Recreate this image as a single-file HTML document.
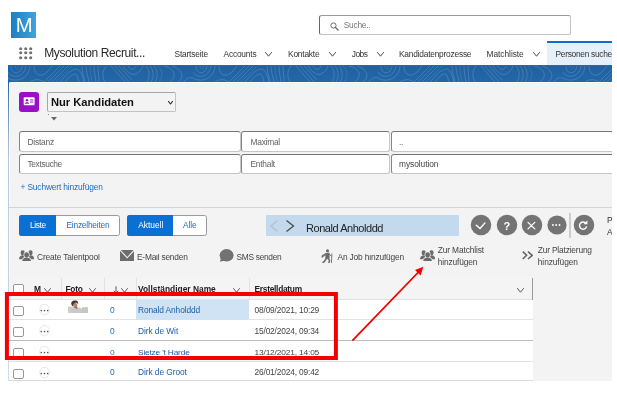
<!DOCTYPE html>
<html lang="de"><head><meta charset="utf-8"><title>Mysolution Recruitment</title>
<style>
html,body{margin:0;padding:0;background:#fff;}
body{width:617px;height:401px;position:relative;overflow:hidden;font-family:"Liberation Sans",sans-serif;}
#app{position:absolute;left:0;top:0;width:612px;height:401px;overflow:hidden;will-change:transform;}
.a{position:absolute;box-sizing:border-box;}
.t{position:absolute;white-space:nowrap;font-family:"Liberation Sans",sans-serif;}
</style></head><body><div id="app">
<div class="a" style="left:8px;top:65px;width:1px;height:316px;background:linear-gradient(#2262a4 0,#2465a6 5.4%,#4a7db3 10.4%,#9cb5d3 23.7%,#b4c8de 30%,#cfdbe8 100%);"></div>
<div class="a" style="left:8px;top:65px;width:604px;height:18px;background:linear-gradient(#1f62a4,#2367a8);border-top:1px solid #0b6fd0;"></div>
<svg class="a" style="left:8px;top:66px" width="604" height="16" viewBox="0 0 604 16">
<defs><pattern id="topo" width="185" height="16" patternUnits="userSpaceOnUse">
<g fill="none" stroke="#ffffff" stroke-opacity="0.27" stroke-width="0.55">
<path d="M3 0 C3 9 13 9 14 0"/><path d="M0 6 C4 13 16 12 18 0"/><path d="M0 12 C8 17 21 13 22 0"/><path d="M7 0 C8 4 10 4 11 0" stroke-dasharray="1 1"/>
<path d="M26 0 C26 10 34 12 40 5 L44 0"/><path d="M22 16 C28 12 33 14 36 16"/>
<path d="M36 16 L52 0"/><path d="M40 16 L56 0"/><path d="M44 16 L60 0"/><path d="M48 16 L64 0" stroke-dasharray="1.5 1"/><path d="M52 16 C58 9 62 4 68 3 C72 3 74 8 76 16"/>
<path d="M57 16 C61 11 64 8 67 8 C69 8 70 12 71 16"/>
<path d="M74 0 C74 6 76 10 77 16"/><path d="M78 0 C78 6 80 10 81 16"/><path d="M82 0 C82 6 83 10 84 16" stroke-dasharray="1.5 1"/><path d="M86 0 C86 6 87 10 88 16"/><path d="M90 0 C90 6 91 10 91 16"/>
<path d="M98 0 C94 5 94 11 97 16"/>
<path d="M103 0 L117 16"/><path d="M107 0 L121 16"/><path d="M111 0 L124 14"/><path d="M115 0 C119 6 124 10 128 8 C132 6 134 3 135 0"/><path d="M120 0 C122 4 126 5 128 0"/>
<path d="M138 0 C142 4 142 12 139 16"/><path d="M142 0 C146 4 146 12 143 16"/><path d="M146 0 C150 4 150 12 147 16"/><path d="M150 0 C155 5 155 11 151 16" stroke-dasharray="1.5 1"/>
<path d="M156 0 C166 2 170 10 162 16"/><path d="M164 0 C174 3 177 11 170 16"/><path d="M176 16 C178 12 182 11 185 12"/>
</g></pattern></defs><rect width="604" height="16" fill="url(#topo)"/></svg>
<div class="a" style="left:9px;top:82px;width:603px;height:299px;background:#f3f3f3;border-top-left-radius:2px;border-left:1px solid #fafafa;border-top:1px solid #fafafa;"></div>
<div class="a" style="left:11px;top:12px;width:25px;height:26px;background:linear-gradient(90deg,#1a80c2,#41a3dd);"></div>
<span class="t" style="left:15.75px;top:12.90px;font-size:19.5px;line-height:25px;color:#fff;transform:scaleX(1.04);transform-origin:50% 50%;">M</span>
<svg class="a" style="left:19.30px;top:46.50px" width="3.4" height="3.4" viewBox="0 0 3.4 3.4"><circle cx="1.7" cy="1.7" r="1.55" fill="#707070"/></svg>
<svg class="a" style="left:24.30px;top:46.50px" width="3.4" height="3.4" viewBox="0 0 3.4 3.4"><circle cx="1.7" cy="1.7" r="1.55" fill="#707070"/></svg>
<svg class="a" style="left:29.30px;top:46.50px" width="3.4" height="3.4" viewBox="0 0 3.4 3.4"><circle cx="1.7" cy="1.7" r="1.55" fill="#707070"/></svg>
<svg class="a" style="left:19.30px;top:51.40px" width="3.4" height="3.4" viewBox="0 0 3.4 3.4"><circle cx="1.7" cy="1.7" r="1.55" fill="#707070"/></svg>
<svg class="a" style="left:24.30px;top:51.40px" width="3.4" height="3.4" viewBox="0 0 3.4 3.4"><circle cx="1.7" cy="1.7" r="1.55" fill="#707070"/></svg>
<svg class="a" style="left:29.30px;top:51.40px" width="3.4" height="3.4" viewBox="0 0 3.4 3.4"><circle cx="1.7" cy="1.7" r="1.55" fill="#707070"/></svg>
<svg class="a" style="left:19.30px;top:56.30px" width="3.4" height="3.4" viewBox="0 0 3.4 3.4"><circle cx="1.7" cy="1.7" r="1.55" fill="#707070"/></svg>
<svg class="a" style="left:24.30px;top:56.30px" width="3.4" height="3.4" viewBox="0 0 3.4 3.4"><circle cx="1.7" cy="1.7" r="1.55" fill="#707070"/></svg>
<svg class="a" style="left:29.30px;top:56.30px" width="3.4" height="3.4" viewBox="0 0 3.4 3.4"><circle cx="1.7" cy="1.7" r="1.55" fill="#707070"/></svg>
<span class="t" style="left:44.20px;top:45.20px;font-size:12px;line-height:16px;color:#2a2a2a;letter-spacing:-0.376px;">Mysolution Recruit...</span>
<div class="a" style="left:319px;top:15px;width:252px;height:20px;background:#fff;border:1px solid #c4c4c4;border-top-color:#999;border-left-color:#666;border-radius:2.5px;"></div>
<svg class="a" style="left:329.8px;top:22.2px" width="10" height="10" viewBox="0 0 10 10"><circle cx="3.5" cy="3.5" r="2.6" fill="none" stroke="#666" stroke-width="0.95"/><path d="M5.5 5.5 L8.2 8" stroke="#666" stroke-width="1.2" stroke-linecap="round"/></svg>
<span class="t" style="left:343.75px;top:20.40px;font-size:8.4px;line-height:11px;color:#777;letter-spacing:-0.248px;">Suche..</span>
<span class="t" style="left:174.50px;top:48.90px;font-size:8.4px;line-height:11px;color:#333;letter-spacing:-0.198px;">Startseite</span>
<span class="t" style="left:223.50px;top:48.90px;font-size:8.4px;line-height:11px;color:#333;letter-spacing:-0.194px;">Accounts</span>
<svg class="a" style="left:265.00px;top:52.10px" width="7.00" height="5.20" viewBox="0 0 7.00 5.20"><path d="M0.5 0.5 L3.50 4.20 L6.50 0.5" fill="none" stroke="#484848" stroke-width="1" stroke-linecap="round" stroke-linejoin="round"/></svg>
<span class="t" style="left:288.00px;top:48.90px;font-size:8.4px;line-height:11px;color:#333;letter-spacing:-0.207px;">Kontakte</span>
<svg class="a" style="left:328.50px;top:52.10px" width="7.00" height="5.20" viewBox="0 0 7.00 5.20"><path d="M0.5 0.5 L3.50 4.20 L6.50 0.5" fill="none" stroke="#484848" stroke-width="1" stroke-linecap="round" stroke-linejoin="round"/></svg>
<span class="t" style="left:351.75px;top:48.90px;font-size:8.4px;line-height:11px;color:#333;letter-spacing:-0.498px;">Jobs</span>
<svg class="a" style="left:376.50px;top:52.10px" width="7.00" height="5.20" viewBox="0 0 7.00 5.20"><path d="M0.5 0.5 L3.50 4.20 L6.50 0.5" fill="none" stroke="#484848" stroke-width="1" stroke-linecap="round" stroke-linejoin="round"/></svg>
<span class="t" style="left:399.00px;top:48.90px;font-size:8.4px;line-height:11px;color:#333;letter-spacing:-0.227px;">Kandidatenprozesse</span>
<span class="t" style="left:486.60px;top:48.90px;font-size:8.4px;line-height:11px;color:#333;letter-spacing:-0.061px;">Matchliste</span>
<svg class="a" style="left:532.50px;top:52.10px" width="7.00" height="5.20" viewBox="0 0 7.00 5.20"><path d="M0.5 0.5 L3.50 4.20 L6.50 0.5" fill="none" stroke="#484848" stroke-width="1" stroke-linecap="round" stroke-linejoin="round"/></svg>
<div class="a" style="left:547.4px;top:41px;width:64.60000000000002px;height:24px;background:#e5f0fb;border-top:2px solid #0b6fd0;"></div>
<span class="t" style="left:555.50px;top:48.90px;font-size:8.4px;line-height:11px;color:#333;letter-spacing:-0.292px;">Personen suchen</span>
<div class="a" style="left:19px;top:92px;width:20px;height:20px;background:#9a0fc8;border-radius:3px;"></div>
<svg class="a" style="left:23px;top:97px" width="12.3" height="8.6" viewBox="0 0 12 9"><rect x="0.3" y="0.3" width="11.4" height="8.4" rx="1" fill="#fff"/><circle cx="3.7" cy="3.4" r="1.3" fill="#9a0fc8"/><path d="M1.6 7 C1.6 5 5.8 5 5.8 7 Z" fill="#9a0fc8"/><rect x="7" y="2.6" width="3.3" height="1" fill="#9a0fc8"/><rect x="7" y="4.8" width="3.3" height="1" fill="#9a0fc8"/></svg>
<div class="a" style="left:47px;top:92px;width:129px;height:20px;background:#f3f3f3;border:1px solid #c2c2c2;border-top-color:#a6a6a6;border-left-color:#a6a6a6;border-radius:2px;"></div>
<span class="t" style="left:51.00px;top:95.40px;font-size:11.2px;line-height:15px;color:#111;font-weight:700;letter-spacing:-0.027px;">Nur Kandidaten</span>
<svg class="a" style="left:168.00px;top:100.80px" width="5.00" height="4.00" viewBox="0 0 5.00 4.00"><path d="M0.5 0.5 L2.50 3.00 L4.50 0.5" fill="none" stroke="#222" stroke-width="1.1" stroke-linecap="round" stroke-linejoin="round"/></svg>
<div class="a" style="left:48px;top:114px;width:1px;height:1px;background:#888;"></div>
<svg class="a" style="left:51px;top:117px" width="6" height="4" viewBox="0 0 6 4"><path d="M0 0 L6 0 L3 3.6 Z" fill="#666"/></svg>
<div class="a" style="left:19px;top:131px;width:221.5px;height:20.5px;background:#fff;border:1px solid #c6c6c6;border-top-color:#777;border-left-color:#858585;border-radius:3px;"></div>
<div class="a" style="left:241px;top:131px;width:148.5px;height:20.5px;background:#fff;border:1px solid #c6c6c6;border-top-color:#777;border-left-color:#858585;border-radius:3px;"></div>
<div class="a" style="left:391px;top:131px;width:225px;height:20.5px;background:#fff;border:1px solid #c6c6c6;border-top-color:#777;border-left-color:#858585;border-radius:3px;"></div>
<div class="a" style="left:19px;top:154px;width:221.5px;height:20px;background:#fff;border:1px solid #c6c6c6;border-top-color:#777;border-left-color:#858585;border-radius:3px;"></div>
<div class="a" style="left:241px;top:154px;width:148.5px;height:20px;background:#fff;border:1px solid #c6c6c6;border-top-color:#777;border-left-color:#858585;border-radius:3px;"></div>
<div class="a" style="left:391px;top:154px;width:225px;height:20px;background:#fff;border:1px solid #c6c6c6;border-top-color:#777;border-left-color:#858585;border-radius:3px;"></div>
<span class="t" style="left:27.50px;top:136.50px;font-size:8.4px;line-height:11px;color:#606060;letter-spacing:-0.216px;">Distanz</span>
<span class="t" style="left:27.50px;top:159.00px;font-size:8.4px;line-height:11px;color:#606060;letter-spacing:-0.369px;">Textsuche</span>
<span class="t" style="left:250.50px;top:136.50px;font-size:8.4px;line-height:11px;color:#606060;letter-spacing:-0.253px;">Maximal</span>
<span class="t" style="left:250.50px;top:159.00px;font-size:8.4px;line-height:11px;color:#606060;letter-spacing:-0.236px;">Enthalt</span>
<span class="t" style="left:399.00px;top:136.80px;font-size:8.4px;line-height:11px;color:#666;letter-spacing:-0.334px;">..</span>
<span class="t" style="left:399.00px;top:159.00px;font-size:8.4px;line-height:11px;color:#444;letter-spacing:-0.065px;">mysolution</span>
<span class="t" style="left:20.50px;top:182.00px;font-size:8.4px;line-height:11px;color:#1b6ec2;letter-spacing:-0.152px;">+ Suchwert hinzufügen</span>
<div class="a" style="left:9px;top:207px;width:603px;height:1px;background:#d4d4d4;"></div>
<div class="a" style="left:19px;top:215px;width:100.5px;height:20.5px;background:#fff;border:1px solid #9a9a9a;border-radius:2.5px;"></div>
<div class="a" style="left:19px;top:215px;width:36.5px;height:20.5px;background:#0b70d4;border-radius:2.5px 0 0 2.5px;"></div>
<span class="t" style="left:30.00px;top:220.00px;font-size:8.4px;line-height:11px;color:#fff;letter-spacing:-0.398px;">Liste</span>
<span class="t" style="left:66.50px;top:220.00px;font-size:8.4px;line-height:11px;color:#1b6ec2;letter-spacing:-0.230px;">Einzelheiten</span>
<div class="a" style="left:127px;top:215px;width:80px;height:20.5px;background:#fff;border:1px solid #9a9a9a;border-radius:2.5px;"></div>
<div class="a" style="left:127px;top:215px;width:46px;height:20.5px;background:#0b70d4;border-radius:2.5px 0 0 2.5px;"></div>
<span class="t" style="left:138.30px;top:220.00px;font-size:8.4px;line-height:11px;color:#fff;letter-spacing:-0.030px;">Aktuell</span>
<span class="t" style="left:183.00px;top:220.00px;font-size:8.4px;line-height:11px;color:#1b6ec2;letter-spacing:-0.127px;">Alle</span>
<div class="a" style="left:266px;top:215px;width:193px;height:20.5px;background:#c3daee;"></div>
<svg class="a" style="left:269px;top:219px" width="28" height="14" viewBox="0 0 28 14"><path d="M8.5 1.5 L2 7 L8.5 12.5" fill="none" stroke="#b4bfc9" stroke-width="1.2"/><path d="M17.5 1.5 L24.5 7 L17.5 12.5" fill="none" stroke="#4a4a4a" stroke-width="1.3"/></svg>
<span class="t" style="left:306.00px;top:220.90px;font-size:11px;line-height:14px;color:#222;letter-spacing:-0.453px;">Ronald Anholddd</span>
<svg class="a" style="left:470.3px;top:214px" width="22" height="22" viewBox="0 0 22 22"><circle cx="11" cy="11" r="10.25" fill="#747474"/></svg>
<svg class="a" style="left:495.6px;top:214px" width="22" height="22" viewBox="0 0 22 22"><circle cx="11" cy="11" r="10.25" fill="#747474"/></svg>
<svg class="a" style="left:520.7px;top:214px" width="22" height="22" viewBox="0 0 22 22"><circle cx="11" cy="11" r="10.25" fill="#747474"/></svg>
<svg class="a" style="left:545.5px;top:214px" width="22" height="22" viewBox="0 0 22 22"><circle cx="11" cy="11" r="9.6" fill="#747474"/></svg>
<svg class="a" style="left:572.6px;top:214px" width="22" height="22" viewBox="0 0 22 22"><circle cx="11" cy="11" r="10.25" fill="#747474"/></svg>
<svg class="a" style="left:470.3px;top:214px" width="130" height="22" viewBox="0 0 130 22"><path d="M6.3 11.3 L10 14.5 L15 8.9" fill="none" stroke="#fff" stroke-width="1.4" stroke-linecap="round" stroke-linejoin="round"/><path d="M58 8.4 L64.8 14.9 M64.8 8.4 L58 14.9" stroke="#fff" stroke-width="1.3" stroke-linecap="round"/><circle cx="82.9" cy="11" r="0.95" fill="#fff"/><circle cx="86.2" cy="11" r="0.95" fill="#fff"/><circle cx="89.5" cy="11" r="0.95" fill="#fff"/><path d="M115.6 9 A3.6 3.6 0 1 0 116.6 12.4" fill="none" stroke="#fff" stroke-width="1.4"/><path d="M117.4 6.3 L117.4 10.2 L113.5 10.2 Z" fill="#fff"/></svg>
<span class="t" style="left:503.60px;top:218.80px;font-size:11px;line-height:14px;color:#fff;font-weight:700;letter-spacing:-0.919px;">?</span>
<div class="a" style="left:569px;top:213px;width:2px;height:25px;background:#cdcdcd;"></div>
<span class="t" style="left:607.00px;top:214.50px;font-size:8.4px;line-height:11px;color:#333;">Pe</span>
<span class="t" style="left:607.00px;top:226.70px;font-size:8.4px;line-height:11px;color:#333;">Ak</span>
<svg class="a" style="left:19px;top:249.8px" width="15.2" height="11.4" viewBox="0 0 15.2 11.4"><g fill="#6b6b6b"><ellipse cx="3.7" cy="2.7" rx="2.15" ry="2.5"/><ellipse cx="11.5" cy="2.7" rx="2.15" ry="2.5"/><path d="M0 9.3 C0 6.8 1.2 5.7 3.4 5.3 L5.6 5.6 L4.6 9.3 Z"/><path d="M15.2 9.3 C15.2 6.8 14 5.7 11.8 5.3 L9.6 5.6 L10.6 9.3 Z"/><path d="M2.5 11.4 C2.5 8.4 4.6 6.7 7.6 6.7 C10.6 6.7 12.7 8.4 12.7 11.4 Z" fill="#f3f3f3"/><ellipse cx="7.6" cy="4.7" rx="3" ry="3.2" fill="#f3f3f3"/><path d="M3.2 11.4 C3.2 8.8 5 7.4 7.6 7.4 C10.2 7.4 12 8.8 12 11.4 Z"/><ellipse cx="7.6" cy="4.8" rx="2.35" ry="2.6"/></g></svg>
<span class="t" style="left:37.00px;top:251.70px;font-size:8.4px;line-height:11px;color:#444;letter-spacing:-0.158px;">Create Talentpool</span>
<svg class="a" style="left:120px;top:249.8px" width="14.4" height="11.4" viewBox="0 0 14.4 11.4"><rect width="14.4" height="11.4" fill="#6c6c6c"/><path d="M-0.2 -0.3 L7.2 7.8 L14.6 -0.3" fill="none" stroke="#f3f3f3" stroke-width="1.1"/></svg>
<span class="t" style="left:137.00px;top:251.70px;font-size:8.4px;line-height:11px;color:#444;letter-spacing:-0.226px;">E-Mail senden</span>
<svg class="a" style="left:219px;top:248.8px" width="15" height="13.4" viewBox="0 0 15 13.4"><ellipse cx="7.6" cy="6.3" rx="7" ry="6.2" fill="#727272"/><path d="M2 8.5 L1 12.8 L6 11.5 Z" fill="#727272"/></svg>
<span class="t" style="left:236.60px;top:251.70px;font-size:8.4px;line-height:11px;color:#444;letter-spacing:-0.319px;">SMS senden</span>
<svg class="a" style="left:321px;top:248.6px" width="12" height="14.8" viewBox="0 0 12 14.8" fill="#6a6a6a" stroke="#6a6a6a" stroke-linecap="round" stroke-linejoin="round"><circle cx="6.5" cy="1.75" r="1.55" stroke="none"/><path d="M4.7 4.3 L8.1 3.9 L8.3 9.3 L4.9 9.7 Z" stroke-width="0.6"/><path d="M4.4 4.7 L1.2 6.2 L0.7 8.3 L2 8.3 L2.6 7 L4.6 6.3 Z" stroke-width="0.4"/><path d="M5.4 9.4 L3.8 11.8 L1.9 14.1" fill="none" stroke-width="1.6"/><path d="M7 9.4 L8.5 11.3 L7.9 14.1" fill="none" stroke-width="1.5"/><path d="M8.2 5.2 L10.2 6.9" fill="none" stroke-width="1"/><path d="M10.9 4.9 L10.4 14.2" fill="none" stroke-width="0.9"/></svg>
<span class="t" style="left:337.50px;top:251.70px;font-size:8.4px;line-height:11px;color:#444;letter-spacing:-0.167px;">An Job hinzufügen</span>
<svg class="a" style="left:419.8px;top:249.8px" width="15.2" height="11.4" viewBox="0 0 15.2 11.4"><g fill="#6b6b6b"><ellipse cx="3.7" cy="2.7" rx="2.15" ry="2.5"/><ellipse cx="11.5" cy="2.7" rx="2.15" ry="2.5"/><path d="M0 9.3 C0 6.8 1.2 5.7 3.4 5.3 L5.6 5.6 L4.6 9.3 Z"/><path d="M15.2 9.3 C15.2 6.8 14 5.7 11.8 5.3 L9.6 5.6 L10.6 9.3 Z"/><path d="M2.5 11.4 C2.5 8.4 4.6 6.7 7.6 6.7 C10.6 6.7 12.7 8.4 12.7 11.4 Z" fill="#f3f3f3"/><ellipse cx="7.6" cy="4.7" rx="3" ry="3.2" fill="#f3f3f3"/><path d="M3.2 11.4 C3.2 8.8 5 7.4 7.6 7.4 C10.2 7.4 12 8.8 12 11.4 Z"/><ellipse cx="7.6" cy="4.8" rx="2.35" ry="2.6"/></g></svg>
<span class="t" style="left:437.80px;top:245.20px;font-size:8.4px;line-height:11px;color:#444;letter-spacing:-0.144px;">Zur Matchlist</span>
<span class="t" style="left:437.80px;top:257.10px;font-size:8.4px;line-height:11px;color:#444;letter-spacing:-0.140px;">hinzufügen</span>
<svg class="a" style="left:522px;top:251.3px" width="11.4" height="8.6" viewBox="0 0 11.4 8.6" fill="none" stroke="#666" stroke-width="1.6"><path d="M0.8 0.6 L4.6 4.3 L0.8 8"/><path d="M6 0.6 L10.2 4.3 L6 8"/></svg>
<span class="t" style="left:537.80px;top:245.20px;font-size:8.4px;line-height:11px;color:#444;letter-spacing:-0.184px;">Zur Platzierung</span>
<span class="t" style="left:537.80px;top:257.10px;font-size:8.4px;line-height:11px;color:#444;letter-spacing:-0.090px;">hinzufügen</span>
<div class="a" style="left:36.5px;top:250px;width:64.0px;height:3.5999999999999943px;background:#f3f3f3;"></div>
<div class="a" style="left:136.5px;top:250px;width:52.0px;height:3.5999999999999943px;background:#f3f3f3;"></div>
<div class="a" style="left:236px;top:250px;width:46px;height:3.5999999999999943px;background:#f3f3f3;"></div>
<div class="a" style="left:337px;top:250px;width:68px;height:3.5999999999999943px;background:#f3f3f3;"></div>
<div class="a" style="left:9px;top:278px;width:523.6px;height:22px;background:#f4f4f4;border-bottom:1px solid #dfe3e6;"></div>
<div class="a" style="left:9px;top:300px;width:523.6px;height:81px;background:#fff;"></div>
<div class="a" style="left:9px;top:319.3px;width:523.6px;height:1.0px;background:#e3e3e3;"></div>
<div class="a" style="left:9px;top:361px;width:523.6px;height:1px;background:#e3e3e3;"></div>
<div class="a" style="left:9px;top:340.3px;width:523.6px;height:1.0px;background:#bdbdbd;"></div>
<div class="a" style="left:9px;top:380.3px;width:523.6px;height:1.0px;background:#dcdcdc;"></div>
<div class="a" style="left:60.5px;top:278px;width:1.0px;height:22px;background:#e2e2e2;"></div>
<div class="a" style="left:103.7px;top:278px;width:1.0px;height:22px;background:#e2e2e2;"></div>
<div class="a" style="left:136.2px;top:278px;width:1.0px;height:22px;background:#e2e2e2;"></div>
<div class="a" style="left:249.2px;top:278px;width:1.0px;height:22px;background:#e2e2e2;"></div>
<div class="a" style="left:532.2px;top:278px;width:1.0px;height:22px;background:#9a9a9a;"></div>
<div class="a" style="left:136px;top:300px;width:113.4px;height:19.5px;background:#cfe3f5;"></div>
<div class="a" style="left:13px;top:284px;width:11px;height:11px;background:#fff;border:1px solid #989898;border-radius:2px;"></div>
<span class="t" style="left:34.00px;top:284.30px;font-size:8.4px;line-height:11px;color:#222;font-weight:700;letter-spacing:-0.997px;">M</span>
<svg class="a" style="left:43.50px;top:288.00px" width="7.00" height="5.20" viewBox="0 0 7.00 5.20"><path d="M0.5 0.5 L3.50 4.20 L6.50 0.5" fill="none" stroke="#555" stroke-width="0.95" stroke-linecap="round" stroke-linejoin="round"/></svg>
<span class="t" style="left:65.50px;top:284.30px;font-size:8.4px;line-height:11px;color:#222;font-weight:700;letter-spacing:-0.297px;">Foto</span>
<svg class="a" style="left:89.00px;top:288.00px" width="7.00" height="5.20" viewBox="0 0 7.00 5.20"><path d="M0.5 0.5 L3.50 4.20 L6.50 0.5" fill="none" stroke="#555" stroke-width="0.95" stroke-linecap="round" stroke-linejoin="round"/></svg>
<svg class="a" style="left:113px;top:286.3px" width="6" height="8" viewBox="0 0 6 8" fill="none" stroke="#444" stroke-width="0.9"><path d="M3 0.3 L3 7 M0.8 4.8 L3 7.2 L5.2 4.8"/></svg>
<svg class="a" style="left:120.50px;top:288.00px" width="7.00" height="5.20" viewBox="0 0 7.00 5.20"><path d="M0.5 0.5 L3.50 4.20 L6.50 0.5" fill="none" stroke="#555" stroke-width="0.95" stroke-linecap="round" stroke-linejoin="round"/></svg>
<span class="t" style="left:138.00px;top:284.30px;font-size:8.4px;line-height:11px;color:#222;font-weight:700;letter-spacing:0.011px;">Vollständiger Name</span>
<svg class="a" style="left:233.00px;top:288.00px" width="7.00" height="5.20" viewBox="0 0 7.00 5.20"><path d="M0.5 0.5 L3.50 4.20 L6.50 0.5" fill="none" stroke="#555" stroke-width="0.95" stroke-linecap="round" stroke-linejoin="round"/></svg>
<span class="t" style="left:254.50px;top:284.30px;font-size:8.4px;line-height:11px;color:#222;font-weight:700;letter-spacing:-0.281px;">Erstelldatum</span>
<svg class="a" style="left:517.00px;top:288.00px" width="7.00" height="5.20" viewBox="0 0 7.00 5.20"><path d="M0.5 0.5 L3.50 4.20 L6.50 0.5" fill="none" stroke="#555" stroke-width="1" stroke-linecap="round" stroke-linejoin="round"/></svg>
<div class="a" style="left:13px;top:306px;width:11px;height:10px;background:#fff;border:1px solid #989898;border-radius:2px;"></div>
<svg class="a" style="left:39.3px;top:304.20px" width="11" height="12" viewBox="0 0 11 12"><ellipse cx="5.45" cy="5.6" rx="4.7" ry="5.3" fill="#fff" stroke="#d6d6d6" stroke-width="0.6"/><circle cx="2.3" cy="6.6" r="0.8" fill="#555"/><circle cx="5.5" cy="6.6" r="0.8" fill="#555"/><circle cx="8.7" cy="6.6" r="0.8" fill="#555"/></svg>
<span class="t" style="left:110.00px;top:305.00px;font-size:8.4px;line-height:11px;color:#1b6ec2;letter-spacing:-0.471px;">0</span>
<span class="t" style="left:138.00px;top:305.00px;font-size:8.4px;line-height:11px;color:#1b5fa8;letter-spacing:-0.116px;">Ronald Anholddd</span>
<span class="t" style="left:254.50px;top:305.00px;font-size:8.4px;line-height:11px;color:#444;letter-spacing:-0.172px;">08/09/2021, 10:29</span>
<div class="a" style="left:13px;top:327px;width:11px;height:10px;background:#fff;border:1px solid #989898;border-radius:2px;"></div>
<svg class="a" style="left:39.3px;top:324.90px" width="11" height="12" viewBox="0 0 11 12"><ellipse cx="5.45" cy="5.6" rx="4.7" ry="5.3" fill="#fff" stroke="#d6d6d6" stroke-width="0.6"/><circle cx="2.3" cy="6.6" r="0.8" fill="#555"/><circle cx="5.5" cy="6.6" r="0.8" fill="#555"/><circle cx="8.7" cy="6.6" r="0.8" fill="#555"/></svg>
<span class="t" style="left:110.00px;top:325.70px;font-size:8.4px;line-height:11px;color:#1b6ec2;letter-spacing:-0.471px;">0</span>
<span class="t" style="left:138.00px;top:325.70px;font-size:8.4px;line-height:11px;color:#1b5fa8;letter-spacing:-0.074px;">Dirk de Wit</span>
<span class="t" style="left:254.50px;top:325.70px;font-size:8.4px;line-height:11px;color:#444;letter-spacing:-0.172px;">15/02/2024, 09:34</span>
<div class="a" style="left:13px;top:348px;width:11px;height:10px;background:#fff;border:1px solid #989898;border-radius:2px;"></div>
<svg class="a" style="left:39.3px;top:346.20px" width="11" height="12" viewBox="0 0 11 12"><ellipse cx="5.45" cy="5.6" rx="4.7" ry="5.3" fill="#fff" stroke="#d6d6d6" stroke-width="0.6"/><circle cx="2.3" cy="6.6" r="0.8" fill="#555"/><circle cx="5.5" cy="6.6" r="0.8" fill="#555"/><circle cx="8.7" cy="6.6" r="0.8" fill="#555"/></svg>
<span class="t" style="left:110.00px;top:347.00px;font-size:8.4px;line-height:11px;color:#1b6ec2;letter-spacing:-0.471px;transform:scaleY(0.8);">0</span>
<span class="t" style="left:138.00px;top:347.00px;font-size:8.4px;line-height:11px;color:#1b5fa8;letter-spacing:-0.205px;transform:scaleY(0.8);">Sietze 't Harde</span>
<span class="t" style="left:254.50px;top:347.00px;font-size:8.4px;line-height:11px;color:#444;letter-spacing:-0.172px;transform:scaleY(0.8);">13/12/2021, 14:05</span>
<div class="a" style="left:13px;top:369px;width:11px;height:10px;background:#fff;border:1px solid #989898;border-radius:2px;"></div>
<svg class="a" style="left:39.3px;top:366.50px" width="11" height="12" viewBox="0 0 11 12"><ellipse cx="5.45" cy="5.6" rx="4.7" ry="5.3" fill="#fff" stroke="#d6d6d6" stroke-width="0.6"/><circle cx="2.3" cy="6.6" r="0.8" fill="#555"/><circle cx="5.5" cy="6.6" r="0.8" fill="#555"/><circle cx="8.7" cy="6.6" r="0.8" fill="#555"/></svg>
<span class="t" style="left:110.00px;top:367.30px;font-size:8.4px;line-height:11px;color:#1b6ec2;letter-spacing:-0.471px;">0</span>
<span class="t" style="left:138.00px;top:367.30px;font-size:8.4px;line-height:11px;color:#1b5fa8;letter-spacing:-0.073px;">Dirk de Groot</span>
<span class="t" style="left:254.50px;top:367.30px;font-size:8.4px;line-height:11px;color:#444;letter-spacing:-0.172px;">26/01/2024, 09:42</span>
<svg class="a" style="left:68px;top:299.5px" width="20.4" height="13.4" viewBox="0 0 20.4 13.4"><defs><filter id="bl" x="-10%" y="-10%" width="120%" height="120%"><feGaussianBlur stdDeviation="0.45"/></filter></defs><g filter="url(#bl)"><rect x="0" y="6.6" width="4.6" height="6.6" fill="#c9d2bf"/><rect x="14" y="7.2" width="6.3" height="6" fill="#bfcdb8"/><path d="M3.6 13.2 L3.8 8.8 C4.6 7 6 6.6 7.4 7 L10.4 7.6 C12.6 7.4 14 8.6 14.2 10 L14.4 13.2 Z" fill="#c5cacb"/><path d="M6.8 7.2 L8.4 9.6 L10 7.8 Z" fill="#a98268"/><ellipse cx="7.2" cy="5.4" rx="2.1" ry="2.6" fill="#b58467" transform="rotate(-15 7.2 5.4)"/><path d="M6.6 7.4 C7.4 8.3 8.8 7.8 9 6.4 C8.4 7 7.4 7.2 6.6 7.4 Z" fill="#5a4034"/><path d="M3.4 4.6 C2.6 1.6 5.4 0.2 7.4 0.6 C9.6 0.4 10.6 2.4 10 4.2 C9.4 3 8 2.6 6.8 3 C5.6 3.4 5.2 4.6 5 6.2 C4.2 6 3.6 5.4 3.4 4.6 Z" fill="#493529"/></g></svg>
<svg class="a" style="left:0;top:285px" width="345" height="80" viewBox="0 285 345 80"><rect x="6.9" y="294" width="329" height="64" fill="none" stroke="#f40000" stroke-width="4"/></svg>
<svg class="a" style="left:340px;top:260px" width="95" height="90" viewBox="340 260 95 90"><path d="M352.4 340.6 L419 271.5" stroke="#f40000" stroke-width="1.8" fill="none"/><path d="M423.3 266.8 L420.6 275.4 L415 270 Z" fill="#f40000"/></svg>
</div></body></html>
